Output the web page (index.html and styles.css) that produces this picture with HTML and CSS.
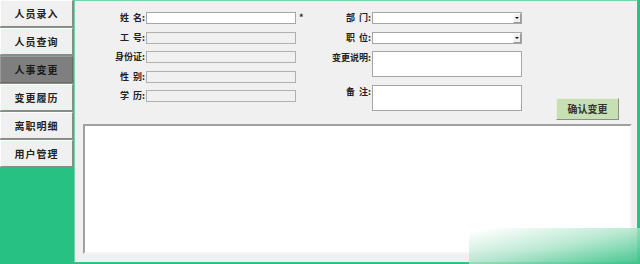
FILE: index.html
```html
<!DOCTYPE html>
<html>
<head>
  <meta charset="UTF-8">
  <title>人事变更</title>
  <link rel="stylesheet" href="styles.css">
</head>
<body>
  <div class="app">
    <nav class="sidebar">
      <button class="nav-btn">人员录入</button>
      <button class="nav-btn">人员查询</button>
      <button class="nav-btn active">人事变更</button>
      <button class="nav-btn">变更履历</button>
      <button class="nav-btn">离职明细</button>
      <button class="nav-btn">用户管理</button>
    </nav>
    <main class="panel">
      <form class="form-area">
        <div class="form-col left-col">
          <label>姓&nbsp;&nbsp;名:</label><input class="field" type="text"><span class="req">*</span>
          <label>工&nbsp;&nbsp;号:</label><input class="field" type="text" disabled><span></span>
          <label>身份证:</label><input class="field" type="text" disabled><span></span>
          <label>性&nbsp;&nbsp;别:</label><input class="field" type="text" disabled><span></span>
          <label>学&nbsp;&nbsp;历:</label><input class="field" type="text" disabled><span></span>
        </div>
        <div class="form-col right-col">
          <label>部&nbsp;&nbsp;门:</label>
          <div class="select-wrap"><select class="field"></select><span class="drop"></span></div>
          <label>职&nbsp;&nbsp;位:</label>
          <div class="select-wrap"><select class="field"></select><span class="drop"></span></div>
          <label class="top">变更说明:</label><textarea class="field"></textarea>
          <label class="top">备&nbsp;&nbsp;注:</label><textarea class="field"></textarea>
        </div>
        <div class="actions">
          <button type="button" class="confirm">确认变更</button>
        </div>
      </form>
      <div class="result"></div>
    </main>
    <div class="watermark"></div>
  </div>
</body>
</html>
```

FILE: styles.css
```css
body { margin: 0; background: #27c283; font-family: "Noto Sans CJK SC", "Noto Sans", sans-serif; }
.app { position: relative; display: flex; width: 640px; height: 264px; overflow: hidden; }

.sidebar { width: 74px; display: flex; flex-direction: column; gap: 1px; }
.nav-btn { width: 73px; height: 27px; padding: 0; background: #f0f0f0; border: 1px solid; border-color: #fcfcfc #8a8a8a #8a8a8a #fcfcfc; font-family: inherit; font-size: 10px; font-weight: bold; color: #222; letter-spacing: 1px; cursor: pointer; }
.nav-btn.active { background: #7f7f7f; border-color: #9a9a9a #6a6a6a #6a6a6a #9a9a9a; color: #1a1a1a; }

.panel { width: 564px; height: 263px; box-sizing: border-box; background: #f0f0f0; border: 1px solid #6fd6a8; border-right-color: #3fbf88; border-bottom-color: #3fbf88; }

.form-area { display: flex; align-items: flex-start; padding-top: 11px; height: 105px; }
.form-col { display: grid; align-items: start; }
.left-col { grid-template-columns: 71px 150px 10px; grid-auto-rows: 12px; row-gap: 7.5px; }
.right-col { grid-template-columns: 66px 150px; grid-template-rows: 12px 12px 26px 26px; row-gap: 7.5px; }
.form-col label { font-size: 9px; font-weight: bold; color: #222; line-height: 12px; text-align: right; white-space: nowrap; padding-right: 1px; }
.form-col label.top { line-height: 9px; padding-top: 2px; }
.req { font-size: 9px; font-weight: bold; line-height: 12px; padding-left: 3px; color: #222; }

.field { display: block; box-sizing: border-box; width: 150px; height: 12px; margin: 0; padding: 0 2px; border: 1px solid #a6a6a6; background: #fff; font-size: 9px; outline: none; }
.field:disabled { background: #f0f0f0; border-color: #b0b0b0; }
textarea.field { height: 26px; resize: none; }
select.field { appearance: none; }

.select-wrap { position: relative; width: 150px; height: 12px; }
.drop { position: absolute; right: 1px; top: 1px; width: 8px; height: 10px; box-sizing: border-box; background: #f0f0f0; border: 1px solid; border-color: #fff #9a9a9a #9a9a9a #fff; }
.drop::after { content: ""; position: absolute; left: 1px; top: 3px; border-left: 2px solid transparent; border-right: 2px solid transparent; border-top: 2px solid #111; }

.actions { padding: 82px 0 0 34px; }
.confirm { width: 63px; height: 22px; padding: 0; background: #c6e0b4; border: 1px solid; border-color: #e6f2de #8c8c8c #8c8c8c #e6f2de; font-family: inherit; font-size: 10px; font-weight: bold; color: #333; cursor: pointer; }

.result { margin: 7px 0 0 8px; width: 549px; height: 130px; box-sizing: border-box; background: #fff; border: 2px solid; border-color: #a0a0a0 #f4f4f4 #f4f4f4 #a0a0a0; }

.watermark { position: absolute; left: 469px; top: 228px; width: 171px; height: 36px; background: linear-gradient(to bottom right, rgba(255, 255, 255, 0.85) 5%, rgba(170, 228, 200, 0.8) 50%, rgba(60, 196, 138, 0.95)); }
```
